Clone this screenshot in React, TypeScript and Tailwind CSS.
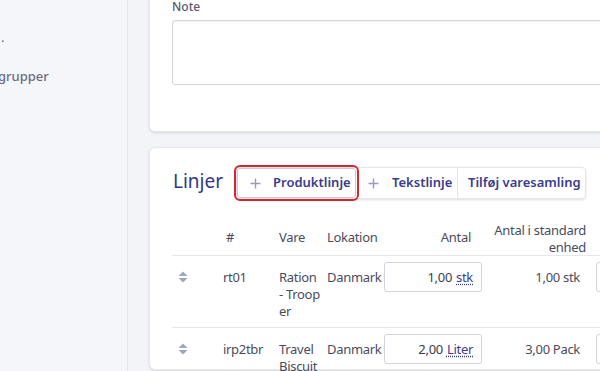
const font = { fontFamily: '"Noto Sans", "Open Sans", sans-serif' };

function SortHandle() {
  return (
    <svg width="10" height="12" viewBox="0 0 10 12" className="text-[#a3a7bd]">
      <path d="M5 0.5 L9.5 5 L0.5 5 Z" fill="currentColor" />
      <path d="M5 11.5 L9.5 7 L0.5 7 Z" fill="currentColor" />
    </svg>
  );
}

function Plus() {
  return (
    <svg width="11" height="11" viewBox="0 0 11 11" className="text-[#9a9cb8]">
      <path d="M5.5 0.5 V10.5 M0.5 5.5 H10.5" stroke="currentColor" strokeWidth="1.4" />
    </svg>
  );
}

type Row = {
  id: string;
  name: string[];
  loc: string;
  qty: string;
  unit: string;
  std: string;
};

const rows: Row[] = [
  { id: "rt01", name: ["Ration", "- Troop", "er"], loc: "Danmark", qty: "1,00", unit: "stk", std: "1,00 stk" },
  { id: "irp2tbr", name: ["Travel", "Biscuit"], loc: "Danmark", qty: "2,00", unit: "Liter", std: "3,00 Pack" },
];

const cols = "grid grid-cols-[51px_56px_48px_57px_99px_113px_1fr]";

const App = () => {
  return (
    <div className="w-[600px] h-[371px] overflow-hidden flex bg-[#f3f4f8]" style={font}>
      <div className="w-[128px] shrink-0 bg-[#f5f6fa] border-r border-[#e6e7ee] pt-[30px]">
        <div className="text-[13px] leading-[14px] text-[#6b6c85] pl-[1px]">.</div>
        <div className="mt-[23px] -ml-[2px] text-[13px] font-medium text-[#6b6c85]">grupper</div>
      </div>
      <div className="pl-[21px] shrink-0">
        <div className="w-[520px] -mt-[12px] bg-white rounded-md border border-[#e7e8ee] shadow-sm px-[22px] pt-[10px] pb-[46px]">
          <div className="text-[12px] leading-[16px] font-medium text-[#57586e]">Note</div>
          <div className="mt-[5px] h-[65px] rounded-[3px] border border-[#d3d5dd] shadow-[inset_0_1px_2px_rgba(0,0,0,0.06)]" />
        </div>
        <div className="w-[520px] mt-[15px] h-[223px] bg-white rounded-md border border-[#e7e8ee] shadow-sm pl-[22px] pt-[19px]">
          <div className="flex items-center">
            <div className="text-[19px] leading-[26px] text-[#34368a] w-[64px] pl-[1px] -mt-[4px]">Linjer</div>
            <div className="flex h-[32px] rounded-[4px] border border-[#e4e5ec] shadow-sm text-[13px] font-semibold text-[#3a3c8e]">
              <div className="relative flex items-center">
                <div className="absolute -inset-[3px] rounded-[6px] border-2 border-[#d8262e]" />
                <button className="flex items-center gap-[12px] w-[119px] h-full pl-[12px] border border-[#c8cad6] rounded-[3px] bg-white">
                  <Plus />
                  <span>Produktlinje</span>
                </button>
              </div>
              <button className="flex items-center gap-[13px] w-[99px] pl-[9px] border-r border-[#e4e5ec] ml-[3px]">
                <Plus />
                <span>Tekstlinje</span>
              </button>
              <button className="flex items-center w-[127px] pl-[10px]">Tilføj varesamling</button>
            </div>
          </div>

          <div className="mt-[22px] text-[13px] tracking-[-0.3px] text-[#4a4b5e] leading-[17px]">
            <div className={`${cols} h-[35px] border-b border-[#e6e7ed]`}>
              <div />
              <div className="pt-[8px] pl-[3px]">#</div>
              <div className="pt-[8px]">Vare</div>
              <div className="pt-[8px]">Lokation</div>
              <div className="pt-[8px] text-right pr-[12px]">Antal</div>
              <div className="text-right pr-[10px] pt-[1px]">
                Antal i standard
                <br />
                enhed
              </div>
              <div />
            </div>
            {rows.map((r) => (
              <div key={r.id} className={`${cols} h-[72px] border-b border-[#e6e7ed]`}>
                <div className="pt-[15px] pl-[6px]">
                  <SortHandle />
                </div>
                <div className="pt-[13px] text-[#4a4b5e]">{r.id}</div>
                <div className="pt-[13px]">
                  {r.name.map((n) => (
                    <div key={n}>{n}</div>
                  ))}
                </div>
                <div className="pt-[13px]">{r.loc}</div>
                <div className="pt-[6px] pr-[1px]">
                  <div className="h-[30px] rounded-[3px] border border-[#d3d5dd] flex items-center justify-end pr-[8px] gap-[4px] text-[#3b3c4e]">
                    <span>{r.qty}</span>
                    <span className="text-[#3a3c8e] underline decoration-dotted underline-offset-2">{r.unit}</span>
                  </div>
                </div>
                <div className="pt-[13px] text-right pr-[16px]">{r.std}</div>
                <div className="pt-[6px]">
                  <div className="h-[30px] w-[60px] rounded-[3px] border border-[#d3d5dd]" />
                </div>
              </div>
            ))}
          </div>
        </div>
      </div>
    </div>
  );
};

export default App;
